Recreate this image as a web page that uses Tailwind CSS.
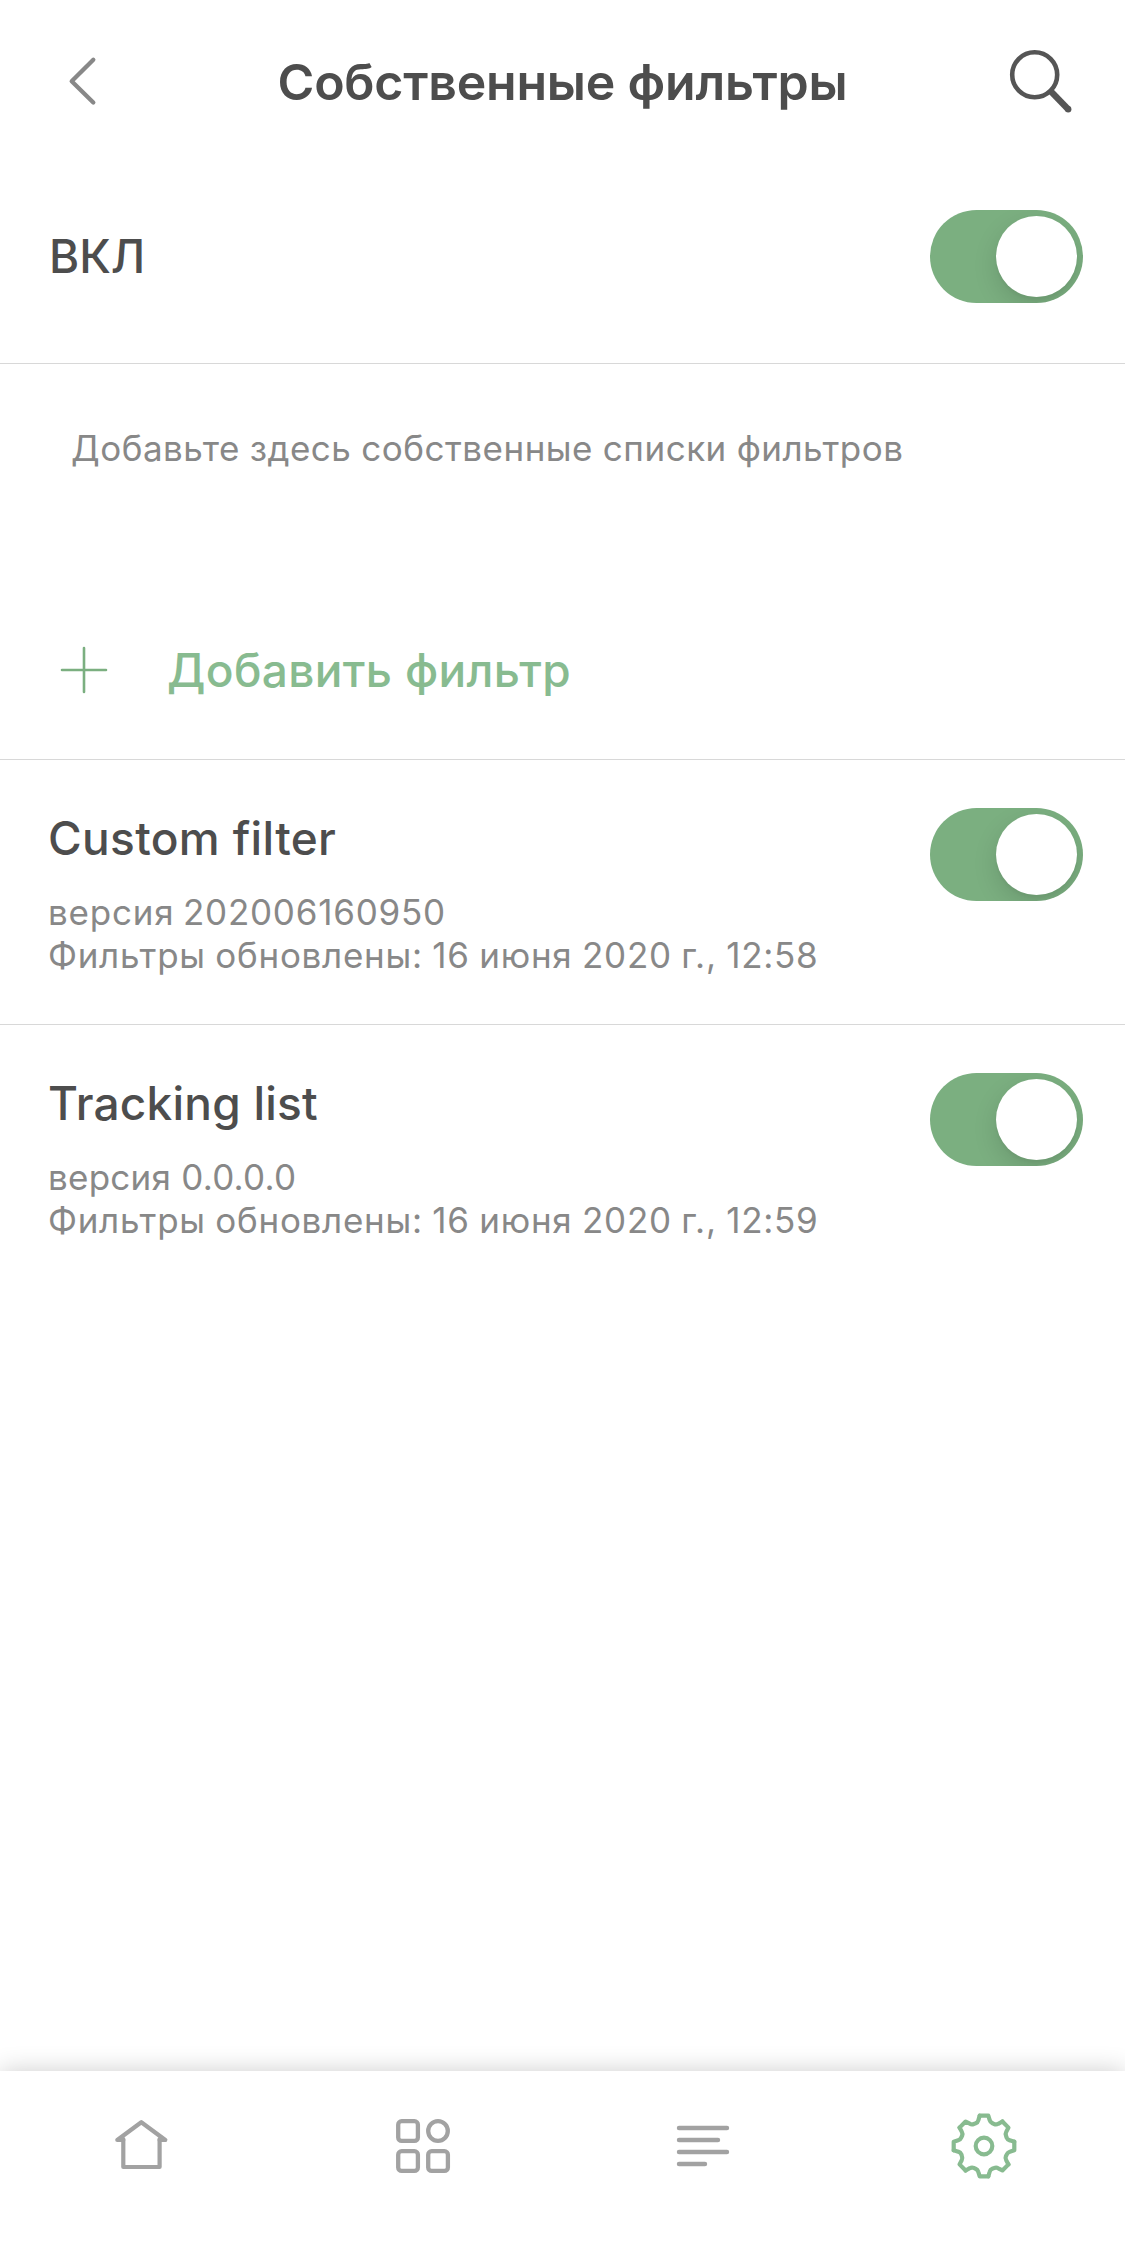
<!DOCTYPE html>
<html lang="ru">

<head>
  <meta charset="UTF-8" />
  <meta name="viewport" content="width=device-width, initial-scale=1.0" />
  <title>Собственные фильтры</title>
  <script src="https://cdn.jsdelivr.net/npm/@tailwindcss/browser@4"></script>
</head>

<body class="font-[Inter,sans-serif] bg-white text-[#4d4d4d] h-screen flex flex-col overflow-hidden">

  <!-- Header -->
  <header class="h-[162px] shrink-0 flex items-center justify-between pl-12 pr-[42px]">
    <button aria-label="Назад">
      <svg class="w-[72px] h-[72px]" viewBox="0 0 72 72" fill="none" stroke="#888888" stroke-width="4.3" stroke-linecap="round" stroke-linejoin="round">
        <path d="M45.3 14.8 23.7 36.3 45.3 57.5" />
      </svg>
    </button>
    <h1 class="text-[50px] font-semibold tracking-[-0.22px] pt-0.5">Собственные фильтры</h1>
    <button aria-label="Поиск">
      <svg class="w-[78px] h-[72px]" viewBox="0 0 78 72" fill="none" stroke="#555555">
        <circle cx="29.7" cy="29.7" r="22.5" stroke-width="4.6" />
        <path d="M46 46.5 63.4 64.4" stroke-width="6.4" />
        <circle cx="63.2" cy="64.2" r="3.2" fill="#555555" stroke="none" />
      </svg>
    </button>
  </header>

  <main class="flex-1">
    <!-- Main switch -->
    <section class="flex items-center justify-between pt-12 pb-15 pl-[49px] pr-[42px] border-b border-[#d8d8d8]">
      <h2 class="text-[46px] font-medium">ВКЛ</h2>
      <button role="switch" aria-checked="true" aria-label="ВКЛ" class="w-[153px] h-[93px] p-1.5 rounded-full bg-[#7baf80] overflow-hidden flex justify-end">
        <span class="size-[81px] rounded-full bg-white shadow-[0_9px_24px_rgba(0,0,0,0.13),0_3px_3px_rgba(0,0,0,0.03)]"></span>
      </button>
    </section>

    <p class="h-[216px] pt-[63px] px-[71px] text-[35px] leading-[43px] tracking-[0.5px] [word-spacing:-0.5px] text-[#888888]">Добавьте здесь собственные списки фильтров</p>

    <button class="w-full h-[180px] flex items-center gap-[59px] px-15 border-b border-[#d8d8d8] text-[#88bb90]">
      <svg class="w-12 h-12" viewBox="0 0 48 48" fill="none" stroke="#7baf80" stroke-width="2.6" stroke-linecap="round">
        <path d="M24 2V46M2 24H46" />
      </svg>
      <span class="pt-0.5 text-[46px] font-medium tracking-[0.35px]">Добавить фильтр</span>
    </button>

    <!-- Filters -->
    <section class="h-[265px] flex items-start justify-between pt-12 pl-12 pr-[42px] border-b border-[#d8d8d8]">
      <div class="pt-0.5">
        <h2 class="text-[46px] leading-[56px] font-medium tracking-[0.34px]">Custom filter</h2>
        <p class="mt-[25px] text-[35px] leading-[43px] tracking-[0.77px] [word-spacing:-2px] text-[#888888]">версия 202006160950</p>
        <p class="text-[35px] leading-[43px] tracking-[0.72px] [word-spacing:-1px] text-[#888888]">Фильтры обновлены: 16 июня 2020 г., 12:58</p>
      </div>
      <button role="switch" aria-checked="true" aria-label="Custom filter" class="w-[153px] h-[93px] p-1.5 rounded-full bg-[#7baf80] overflow-hidden flex justify-end">
        <span class="size-[81px] rounded-full bg-white shadow-[0_9px_24px_rgba(0,0,0,0.13),0_3px_3px_rgba(0,0,0,0.03)]"></span>
      </button>
    </section>

    <section class="h-[265px] flex items-start justify-between pt-12 pl-12 pr-[42px]">
      <div class="pt-0.5">
        <h2 class="text-[46px] leading-[56px] font-medium tracking-[0.22px]">Tracking list</h2>
        <p class="mt-[25px] text-[35px] leading-[43px] tracking-[0.25px] text-[#888888]">версия 0.0.0.0</p>
        <p class="text-[35px] leading-[43px] tracking-[0.72px] [word-spacing:-1px] text-[#888888]">Фильтры обновлены: 16 июня 2020 г., 12:59</p>
      </div>
      <button role="switch" aria-checked="true" aria-label="Tracking list" class="w-[153px] h-[93px] p-1.5 rounded-full bg-[#7baf80] overflow-hidden flex justify-end">
        <span class="size-[81px] rounded-full bg-white shadow-[0_9px_24px_rgba(0,0,0,0.13),0_3px_3px_rgba(0,0,0,0.03)]"></span>
      </button>
    </section>
  </main>

  <!-- Tab bar -->
  <nav class="h-[177px] shrink-0 grid grid-cols-4 justify-items-center items-start pt-[39px] bg-white shadow-[0_0_24px_rgba(0,0,0,0.2)]">
    <a href="#" aria-label="Главная">
      <svg class="size-[72px]" viewBox="0 0 72 72" fill="none" stroke="#a2a2a2" stroke-width="4.2" stroke-linecap="round" stroke-linejoin="round">
        <path d="M18.3 29V57H54.6V29" />
        <path d="M18.3 30H12.3L36.3 12.2 60.3 30H54.6" />
      </svg>
    </a>
    <a href="#" aria-label="Защита">
      <svg class="size-[72px]" viewBox="0 0 72 72" fill="none" stroke="#a2a2a2" stroke-width="4.3">
        <rect x="12.2" y="11.2" width="19.7" height="19.7" rx="3.5" />
        <circle cx="52" cy="21" r="9.8" />
        <rect x="12.2" y="41.2" width="19.7" height="19.7" rx="3.5" />
        <rect x="42.2" y="41.2" width="19.7" height="19.7" rx="3.5" />
      </svg>
    </a>
    <a href="#" aria-label="Журнал">
      <svg class="size-[72px]" viewBox="0 0 72 72" fill="none" stroke="#a2a2a2" stroke-width="4.4" stroke-linecap="round">
        <path d="M12 18H60M12 30H51M12 42H60M12 54H38" />
      </svg>
    </a>
    <a href="#" aria-label="Настройки">
      <svg class="size-[72px]" viewBox="0 0 72 72" fill="none" stroke="#88bb90" stroke-width="4.2" stroke-linecap="round" stroke-linejoin="round">
        <circle cx="36" cy="36" r="8.3" />
        <g transform="translate(36 36)">
          <path id="tooth" d="M-4.3-30.3H4.3L5.7-25.8Q6.3-23.7 8.4-22.8L10.2-21.9Q12.2-21 14.2-22.2L18.4-24.5" />
          <use href="#tooth" transform="rotate(45)" />
          <use href="#tooth" transform="rotate(90)" />
          <use href="#tooth" transform="rotate(135)" />
          <use href="#tooth" transform="rotate(180)" />
          <use href="#tooth" transform="rotate(225)" />
          <use href="#tooth" transform="rotate(270)" />
          <use href="#tooth" transform="rotate(315)" />
        </g>
      </svg>
    </a>
  </nav>

</body>

</html>
